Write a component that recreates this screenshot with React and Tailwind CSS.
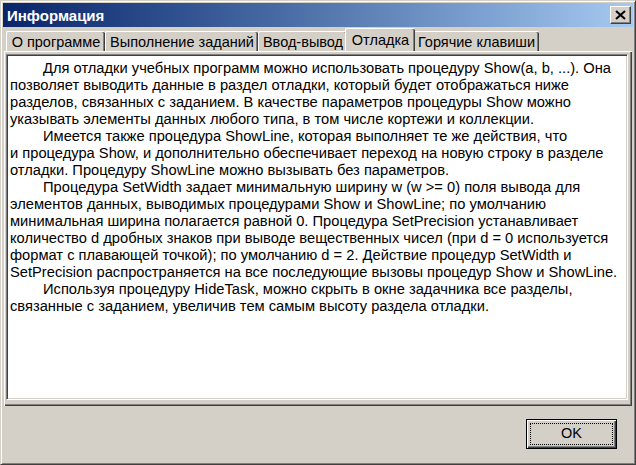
import React from 'react';

const lines = [
  { t: 'Для отладки учебных программ можно использовать процедуру Show(a, b, ...). Она', indent: true },
  { t: 'позволяет выводить данные в раздел отладки, который будет отображаться ниже' },
  { t: 'разделов, связанных с заданием. В качестве параметров процедуры Show можно' },
  { t: 'указывать элементы данных любого типа, в том числе кортежи и коллекции.' },
  { t: 'Имеется также процедура ShowLine, которая выполняет те же действия, что', indent: true },
  { t: 'и процедура Show, и дополнительно обеспечивает переход на новую строку в разделе' },
  { t: 'отладки. Процедуру ShowLine можно вызывать без параметров.' },
  { t: 'Процедура SetWidth задает минимальную ширину w (w >= 0) поля вывода для', indent: true },
  { t: 'элементов данных, выводимых процедурами Show и ShowLine; по умолчанию' },
  { t: 'минимальная ширина полагается равной 0. Процедура SetPrecision устанавливает' },
  { t: 'количество d дробных знаков при выводе вещественных чисел (при d = 0 используется' },
  { t: 'формат с плавающей точкой); по умолчанию d = 2. Действие процедур SetWidth и' },
  { t: 'SetPrecision распространяется на все последующие вызовы процедур Show и ShowLine.' },
  { t: 'Используя процедуру HideTask, можно скрыть в окне задачника все разделы,', indent: true },
  { t: 'связанные с заданием, увеличив тем самым высоту раздела отладки.' },
];

const tabs = [
  { label: 'О программе', w: 'w-[99px]' },
  { label: 'Выполнение заданий', w: 'w-[153px]' },
  { label: 'Ввод-вывод', w: 'w-[89px]' },
  { label: 'Отладка', w: 'w-[70px]', active: true },
  { label: 'Горячие клавиши', w: 'w-[126px]' },
];

function Tab({ label, w, active }) {
  if (active) {
    return (
      <div className={`${w} -mx-[2px] h-[23px] self-end relative z-10 bg-[#d4d0c8] border-l border-t border-white rounded-tl-[2px] rounded-tr-[2px] shadow-[inset_-1px_0_#404040,inset_-2px_0_#808080] flex items-start justify-center pt-[1px] text-[14.5px] text-black`}>
        {label}
      </div>
    );
  }
  return (
    <div className={`${w} h-[20px] self-end bg-[#d4d0c8] border-l border-t border-white rounded-tl-[2px] rounded-tr-[2px] shadow-[inset_-1px_0_#404040,inset_-2px_0_#808080] flex items-start justify-center text-[14.5px] text-black`}>
      {label}
    </div>
  );
}

export default function App() {
  return (
    <div className="w-[636px] h-[465px] bg-[#d4d0c8] border border-t-[#d4d0c8] border-l-[#d4d0c8] border-r-[#404040] border-b-[#404040] shadow-[inset_1px_1px_#ffffff,inset_-1px_-1px_#808080] p-[2px] flex flex-col font-['Liberation_Sans',Arial,sans-serif] select-none">
      <div className="h-[24px] shrink-0 bg-gradient-to-r from-[#0a246a] to-[#a6caf0] flex items-center justify-between pl-[4px] pr-[2px]">
        <span className="text-white font-bold text-[15px] leading-none">Информация</span>
        <div className="w-[21px] h-[18px] bg-[#d4d0c8] border border-t-white border-l-white border-r-[#404040] border-b-[#404040] shadow-[inset_-1px_-1px_#808080] flex items-center justify-center">
          <svg width="11" height="10" viewBox="0 0 11 10">
            <path d="M1 1 L10 9 M10 1 L1 9" stroke="#000" strokeWidth="2" />
          </svg>
        </div>
      </div>

      <div className="flex h-[23px] mt-[1px] pl-[3px] items-end">
        {tabs.map((t) => (
          <Tab key={t.label} {...t} />
        ))}
      </div>

      <div className="mx-[1px] h-[355px] border-l border-t border-white shadow-[inset_-1px_-1px_#404040,inset_-2px_-2px_#808080] pl-[1px] pt-[2px] pr-[4px] pb-[6px] flex flex-col">
        <div className="flex-1 bg-white border border-t-[#808080] border-l-[#808080] border-r-white border-b-white shadow-[inset_1px_1px_#404040,inset_-1px_-1px_#d4d0c8] pl-[3px] pt-[5px] text-[14.7px] leading-[17px] text-black">
          {lines.map((l, i) => (
            <div key={i} className={`whitespace-nowrap ${l.indent ? 'pl-[33px]' : ''}`}>
              {l.t}
            </div>
          ))}
        </div>
      </div>

      <div className="flex-1 flex justify-end items-start pt-[13px] pr-[16px]">
        <button className="w-[91px] h-[30px] bg-[#d4d0c8] border border-black shadow-[inset_1px_1px_#ffffff,inset_-1px_-1px_#404040,inset_-2px_-2px_#808080] flex items-center justify-center p-[3px]">
          <span className="w-full h-full border border-dotted border-black flex items-center justify-center text-[14.5px] text-black">OK</span>
        </button>
      </div>
    </div>
  );
}
